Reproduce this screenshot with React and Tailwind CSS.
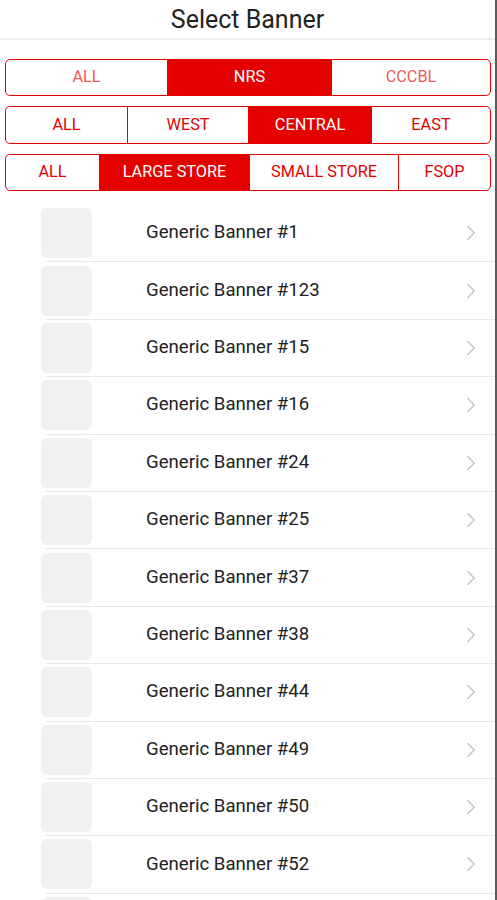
import { ChevronRight } from "lucide-react";

const groups = [
  { items: ["ALL", "NRS", "CCCBL"], active: 1, widths: ["161px", "164px", "1fr"], faded: true, h: "h-[37px]" },
  { items: ["ALL", "WEST", "CENTRAL", "EAST"], active: 2, widths: ["121px", "121px", "123px", "1fr"], h: "h-[38px]" },
  { items: ["ALL", "LARGE STORE", "SMALL STORE", "FSOP"], active: 1, widths: ["93px", "150px", "149px", "1fr"], h: "h-[37px]" },
];

const banners = ["1", "123", "15", "16", "24", "25", "37", "38", "44", "49", "50", "52"];

function Segmented({ group }) {
  return (
    <div
      className={"grid rounded-[5px] border border-[#e50000] overflow-hidden " + group.h}
      style={{ gridTemplateColumns: group.widths.join(" ") }}
    >
      {group.items.map((label, i) => {
        const on = i === group.active;
        return (
          <div
            key={label}
            className={
              "flex items-center justify-center text-[16.3px] " +
              (i > 0 ? "border-l border-[#e50000] " : "") +
              (on ? "bg-[#e50000] text-white" : group.faded ? "text-[#ec5b5b]" : "text-[#e50000]")
            }
          >
            {label}
          </div>
        );
      })}
    </div>
  );
}

function Row({ children, last }) {
  return (
    <div className="h-[57.4px] flex items-center pl-[46px]">
      <div className="flex-1 h-full flex items-center border-b border-[#e9e9e9]">
        <div className="w-[51px] h-[50px] -ml-[5px] rounded-[6px] bg-[#f1f1f1] shrink-0" />
        {!last && children}
      </div>
    </div>
  );
}

export default function App() {
  return (
    <div className="w-[497px] h-[900px] overflow-hidden bg-white border-r-2 border-[#5c5c5c] font-['Roboto',sans-serif]">
      <div className="h-[40px] flex items-center justify-center pt-[1px] border-b-2 border-[#eeeeee] text-[25px] text-[#222]">
        Select Banner
      </div>

      <div className="flex flex-col gap-[10px] pl-[5px] pr-[4px] pt-[19px]">
        {groups.map((g, i) => (
          <Segmented key={i} group={g} />
        ))}
      </div>

      <div className="mt-[14px]">
        {banners.map((n) => (
          <Row key={n}>
            <div className="flex-1 pl-[54px] text-[18.6px] text-[#222]">Generic Banner #{n}</div>
            <ChevronRight className="mr-[11px] text-[#c4c4c4]" size={26} strokeWidth={1.3} />
          </Row>
        ))}
        <Row last />
      </div>
    </div>
  );
}
